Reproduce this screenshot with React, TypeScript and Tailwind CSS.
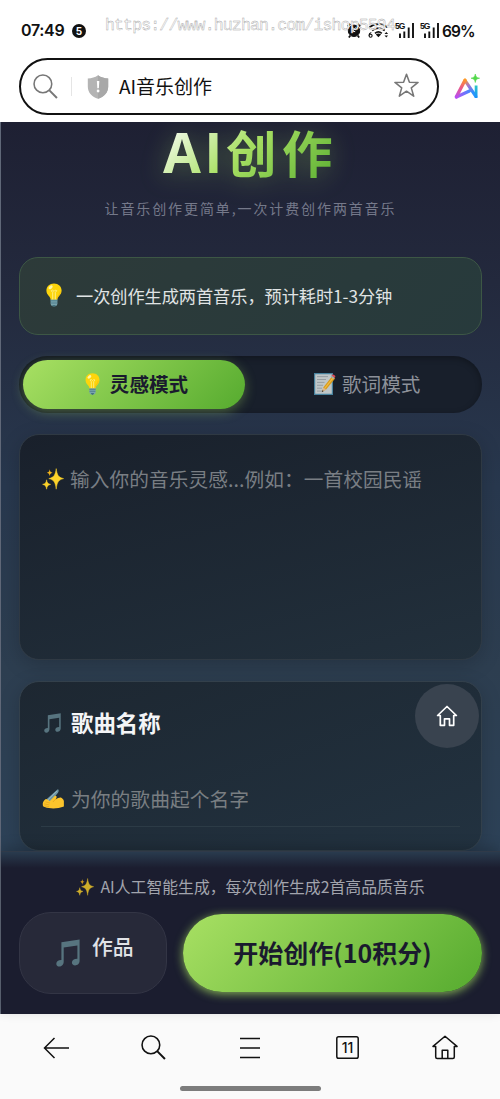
import React from "react";

type IconProps = { className?: string };

const Bulb = ({ className }: IconProps) => (
  <svg className={className} viewBox="0 0 16 24" fill="none">
    <path d="M4.6 16h6.8v4.6c0 1.8-1.4 3-3.4 3s-3.4-1.2-3.4-3z" fill="#78a3ad" />
    <path d="M4.6 17.8h6.8M4.8 20h6.4" stroke="#4c7c8a" strokeWidth=".9" />
    <path d="M6.2 22.2h3.6c-.4 1-1 1.4-1.8 1.4s-1.4-.4-1.8-1.4z" fill="#35626f" />
    <path d="M8 .4C3.6.4.4 3.5.4 7.6c0 2.6 1.2 4 2.4 5.4 1 1.200 1.700 2.200 1.800 3.600h6.800c.1-1.400.8-2.400 1.800-3.600 1.200-1.400 2.400-2.800 2.400-5.400C15.600 3.500 12.400.4 8 .4z" fill="#fdd50b" />
    <path d="M6.700 16.400V9.500L5.300 7.700l1.400-.6 1.300 1.300 1.300-1.300 1.400.6-1.400 1.800v6.900" stroke="#fff2a0" strokeWidth=".8" />
    <ellipse cx="4.600" cy="4.300" rx="2.400" ry="1.500" transform="rotate(-40 4.600 4.300)" fill="#fff6a8" />
    <path d="M14.300 8.500c-.3 3.500-2.800 4.300-3.500 7.300" stroke="#f3b312" strokeWidth=".8" />
  </svg>
);

const Sparkles = ({ className }: IconProps) => (
  <svg className={className} viewBox="0 0 22 22">
    <path d="M14.200.6c.9 6.300 2 8.700 7.400 10-5.400 1.300-6.500 3.900-7.400 10.600-.9-6.700-2-9.300-7.400-10.600 5.400-1.300 6.500-3.700 7.400-10z" fill="#fdd32a" stroke="#fdd32a" strokeWidth=".5" />
    <path d="M4.600 11.800c.5 3 1.200 4 4 4.600-2.800.6-3.500 1.800-4 4.800-.5-3-1.200-4.200-4-4.800 2.800-.6 3.500-1.600 4-4.600z" fill="#fdd32a" stroke="#fdd32a" strokeWidth=".5" />
    <path d="M7.700 1.200c.4 2.200.9 3 2.900 3.500-2 .5-2.500 1.300-2.900 3.500-.4-2.200-.9-3-2.900-3.500 2-.5 2.500-1.300 2.900-3.500z" fill="#f4b41a" />
  </svg>
);

const Notes = ({ className }: IconProps) => (
  <svg className={className} viewBox="0 0 24 28" fill="#57747f">
    <path d="M5.400 3.200 23.600.4v21.400c0 2.800-2.200 4.700-4.500 4.700-1.900 0-3.200-1.200-3.200-2.900 0-2.300 2.300-4 5.500-3.900V6.500L7.700 8.600v14.200c0 2.800-2.100 4.800-4.400 4.800C1.500 27.600.3 26.400.3 24.700c0-2.300 2.100-3.900 5.100-3.800z" />
  </svg>
);

const Memo = ({ className }: IconProps) => (
  <svg className={className} viewBox="0 0 22 22" fill="none">
    <path d="M.6.6h17.800v20.800H.6z" fill="#bfc6c8" stroke="#48839f" strokeWidth="1.200" />
    <path d="M3 3.600h11M3 6.500h9M3 9.400h7.500M3 12.300h6M3 15.200h5M3 18.100h5" stroke="#858d92" strokeWidth=".7" />
    <path d="m8 18.900 1.300-4.500 8.800-11.200 3 2.400-9 11z" fill="#d89a1c" />
    <path d="m10.700 15.300 8.800-10.900" stroke="#f1bd42" strokeWidth="1.100" />
    <path d="m8 18.900 1.300-4.500 2.800 2.200z" fill="#d9b692" />
    <path d="m7.800 19.200.7-2 1.200.9z" fill="#222" />
    <path d="m17.500 2.800.8-1.100c.9-1 3.800 1.200 2.900 2.300l-.8 1z" fill="#d94854" />
    <path d="m16.600 3.700.9-1.100 3 2.400-.9 1.100z" fill="#9daeb4" />
  </svg>
);

const Writing = ({ className }: IconProps) => (
  <svg className={className} viewBox="0 0 23 21" fill="none">
    <path d="M2 18.500 5.100 10 16 .3c1.500.4.9 2.400.2 3.600L8 14z" fill="#6e96a5" />
    <path d="M5.700 11.400 15.200 2" stroke="#a4c0ca" strokeWidth=".8" />
    <path d="M2.400 11.200c1-1.100 2-.8 3.200.2l1.900 1.400 4.900-5.300c1.200-1.200 2.900-.1 2.300 1.300l-1 2.100c2.100-1.300 4.700-2.400 6-1.700.9.500 2.300 1.800 2.700 3.300v5.900c-3.300 1.300-7.700 2.100-11.100 2.100-3.100 0-6.400-.4-9.100-1.500L.5 18.200l-.2-1.500c-.4-1.900.4-3.700 2.100-5.500z" fill="#fbc42c" />
    <path d="m3.400 13.500 4 1.200m-5.300 1 4.800 1m-4.400 1.100 4 .7M13.800 10.500l-2.700 2.900" stroke="#df9e18" strokeWidth=".7" strokeLinecap="round" />
  </svg>
);

const Search = ({ className }: IconProps) => (
  <svg className={className} viewBox="0 0 24 24" fill="none" stroke="currentColor" strokeWidth="1.500">
    <circle cx="9.500" cy="9.500" r="8.500" />
    <path d="m15.500 15.500 7.500 7.500" strokeWidth="1.900" />
  </svg>
);

const Shield = ({ className }: IconProps) => (
  <svg className={className} viewBox="0 0 22 24">
    <path d="M11 .3c3 2.300 6.300 2.900 10.200 3.200v8c0 6.300-4.400 10.400-10.200 12.200C5.200 21.900.8 17.800.8 11.500v-8C4.700 3.200 8 2.600 11 .3z" fill="#b4b4b4" />
    <path d="M11 .3c3 2.300 6.300 2.900 10.200 3.200v8c0 6.300-4.400 10.400-10.200 12.200z" fill="#a8a8a8" />
    <path d="M9.900 6h2.400l-.4 7.200h-1.600z" fill="#fff" />
    <circle cx="11.100" cy="16" r="1.400" fill="#fff" />
  </svg>
);

const Star = ({ className }: IconProps) => (
  <svg className={className} viewBox="0 0 24 24" fill="none" stroke="#777" strokeWidth="1.500" strokeLinejoin="round">
    <path d="m12 1.200 2.800 7.600 8.300.3-6.500 5.200 2.300 7.900L12 17.500l-6.900 4.700 2.300-7.900L.9 9.100l8.300-.3z" />
  </svg>
);

const AiLogo = ({ className }: IconProps) => (
  <svg className={className} viewBox="0 0 26 26" fill="none">
    <defs>
      <linearGradient id="ai-left" x1="11" y1="5" x2="3" y2="24" gradientUnits="userSpaceOnUse">
        <stop stopColor="#ff9a22" />
        <stop offset=".45" stopColor="#ed5b83" />
        <stop offset="1" stopColor="#b64df5" />
      </linearGradient>
      <linearGradient id="ai-base" x1="2" y1="23" x2="16" y2="17" gradientUnits="userSpaceOnUse">
        <stop stopColor="#bb50f5" />
        <stop offset="1" stopColor="#4388ff" />
      </linearGradient>
      <linearGradient id="ai-right" x1="11" y1="5" x2="21" y2="23" gradientUnits="userSpaceOnUse">
        <stop stopColor="#ff9d20" />
        <stop offset=".4" stopColor="#9a72da" />
        <stop offset=".75" stopColor="#2d91ff" />
      </linearGradient>
      <linearGradient id="ai-stem" x1="0" y1="11" x2="0" y2="24" gradientUnits="userSpaceOnUse">
        <stop stopColor="#2cc8c4" />
        <stop offset="1" stopColor="#168fff" />
      </linearGradient>
    </defs>
    <path d="m2.400 23 13-6" stroke="url(#ai-base)" strokeWidth="3.200" strokeLinecap="round" />
    <path d="m11 6.300 10.800 16" stroke="url(#ai-right)" strokeWidth="3.200" strokeLinecap="round" />
    <path d="M2.400 22.800 11 6.300" stroke="url(#ai-left)" strokeWidth="3.400" strokeLinecap="round" />
    <path d="M20.700 11.500h2.800V24h-2.800z" fill="url(#ai-stem)" />
    <path d="M21.300 0c.6 3 1.300 3.600 4.300 4.200-3 .6-3.700 1.300-4.300 4.300-.6-3-1.300-3.700-4.300-4.300C20 3.600 20.700 3 21.300 0z" fill="#52d84a" stroke="#52d84a" strokeWidth=".6" />
  </svg>
);

const Alarm = ({ className }: IconProps) => (
  <svg className={className} viewBox="0 0 14 15" fill="none" stroke="#111">
    <circle cx="7" cy="7.800" r="5.700" fill="#111" />
    <path d="M.7 3.300 3.300.8m7.400 0 2.600 2.500M3.300 12.600l-1.500 1.900m8.900-1.900 1.500 1.900" strokeWidth="1.700" />
    <path d="M8.500 4.500 5.700 8.200l2.500.5" stroke="#fff" strokeWidth="1" />
  </svg>
);

const Wifi = ({ className }: IconProps) => (
  <svg className={className} viewBox="0 0 21 15" fill="none" stroke="#111" strokeWidth="1.700">
    <path d="M1.400 4.300c5-4.300 13-4.300 18 0M4.100 7.500c3.700-3.200 9-3.200 12.600 0M7 10.300c2-1.700 4.800-1.700 6.800 0" />
    <path d="m7.800 11.400 2.600 2.800 2.700-2.800c-1.600-1.200-3.700-1.200-5.300 0z" fill="#111" stroke="none" />
    <path d="M3.300 9.500C1.600 10 1 11.300 1 12.500" strokeWidth="1.100" />
    <circle cx="2.600" cy="12.800" r="1.500" strokeWidth="1.100" />
    <path d="m16.500 11 1.800-2 1.800 2zm0 1.500 1.800 2 1.800-2z" fill="#111" stroke="none" />
  </svg>
);

const Signal = () => (
  <div className="relative h-[15px] w-[20px]">
    <span className="absolute left-0 top-0 font-['Liberation_Sans'] text-[8.500px] font-bold leading-[7px] tracking-[-1px]">5G</span>
    <svg className="h-full w-full" viewBox="0 0 20 15" stroke="#111" strokeWidth="1.900">
      <path d="M5 10.500V15M9.300 8.500V15M13.700 4.500V15M18 0v15" />
    </svg>
  </div>
);

const HomeSmall = ({ className }: IconProps) => (
  <svg className={className} viewBox="0 0 22 22" fill="none" stroke="#fff" strokeWidth="1.700" strokeLinejoin="round" strokeLinecap="round">
    <path d="M4.300 10.500H1.600L11 1.500l9.400 9h-2.700v9.800h-4.200v-6.500h-5v6.500H4.300z" />
  </svg>
);

const StatusBar = () => (
  <div className="relative flex h-[58px] shrink-0 items-start pt-[20px] font-['Inter',sans-serif] text-[#111]">
    <span className="ml-[21px] w-[51px] text-[16px] font-semibold leading-[21px] tracking-[-0.3px]">07:49</span>
    <span className="mt-[4px] flex size-[14px] items-center justify-center rounded-full bg-[#111] text-[10px] font-bold text-white">5</span>
    <Alarm className="ml-[261px] mt-[3px] h-[15px] w-[14px]" />
    <Wifi className="ml-[7px] mt-[3px] h-[15px] w-[21px]" />
    <div className="ml-[6px] mt-[3px]"><Signal /></div>
    <div className="ml-[5px] mt-[3px]"><Signal /></div>
    <span className="ml-[2px] text-[15.500px] font-semibold leading-[23px] tracking-[-0.9px]">69%</span>
    <span className="absolute left-[105px] top-[15px] font-['Liberation_Mono',monospace] text-[16.500px] leading-[22px] tracking-[-0.840px] text-white [-webkit-text-stroke:0.400px_#a3a3a3]">
      https://www.huzhan.com/ishop5594
    </span>
  </div>
);

const AddressBar = () => (
  <div className="flex h-[64px] shrink-0 items-start pl-[19px]">
    <div className="flex h-[57px] w-[420px] items-center rounded-full border-2 border-[#111] bg-white pl-[12px]">
      <Search className="size-[25px] text-[#777]" />
      <span className="ml-[13px] h-[19px] w-px bg-[#e5e5e5]" />
      <Shield className="ml-[15px] h-[24px] w-[22px]" />
      <span className="-mt-[2px] ml-[10px] text-[19px] leading-[28px] text-[#111]">AI音乐创作</span>
      <Star className="-mt-[2px] ml-auto mr-[18px] size-[25px]" />
    </div>
    <AiLogo className="ml-[15px] mt-[16px] size-[26px]" />
  </div>
);

const Hero = () => (
  <header className="flex h-[135px] flex-col items-center">
    <h1 className="flex h-[64px] items-start bg-[linear-gradient(135deg,#ffffff_0%,#a8e063_45%,#56ab2f_100%)] bg-clip-text font-bold text-transparent [filter:drop-shadow(0_3px_12px_rgba(168,224,99,0.320))]">
      <span className="font-['Open_Sans'] text-[55px] leading-[60px] tracking-[3.500px]">AI</span>
      <span className="text-[50.500px] leading-[58px] tracking-[5.500px]">创作</span>
    </h1>
    <p className="mt-[12px] text-[14px] leading-[21px] tracking-[1.900px] text-[#75798a]">让音乐创作更简单,一次计费创作两首音乐</p>
  </header>
);

const Hint = () => (
  <div className="flex h-[78px] items-center rounded-[19px] border border-[#3d5745] bg-[linear-gradient(135deg,#2d3a39,#273a3c)] pl-[26px]">
    <Bulb className="-mt-[2px] h-[24px] w-[16px]" />
    <span className="ml-[14px] text-[17.200px] leading-[26px] tracking-[-0.050px] text-[#e0e4e5]">一次创作生成两首音乐，预计耗时1-3分钟</span>
  </div>
);

const Tabs = () => (
  <div className="mt-[21px] flex h-[57px] rounded-full bg-[#181f2b] p-[4px] shadow-[inset_0_2px_6px_rgba(0,0,0,0.300)]">
    <button className="flex h-[49px] w-[222px] items-center justify-center rounded-full bg-[linear-gradient(135deg,#a8e063,#56ab2f)] pl-[5px] shadow-[0_3px_12px_rgba(168,224,99,0.350)]">
      <Bulb className="-mt-[2px] h-[22px] w-[15px]" />
      <span className="-mt-[2px] ml-[10px] text-[19.600px] font-bold leading-[28px] text-[#1a1a2e]">灵感模式</span>
    </button>
    <button className="flex flex-1 items-center pl-[69px]">
      <Memo className="-mt-[2px] size-[22px]" />
      <span className="-mt-[2px] ml-[6px] text-[19.600px] leading-[28px] text-[#8d919a]">歌词模式</span>
    </button>
  </div>
);

const Inspiration = () => (
  <section className="mt-[21px] flex h-[226px] items-start rounded-[20px] border border-[#2f3943] bg-[linear-gradient(165deg,#19202b,#22303c)] pl-[22px] pt-[33px] shadow-[0_5px_20px_rgba(0,0,0,0.180)]">
    <Sparkles className="size-[22px]" />
    <span className="-mt-[3px] ml-[6px] text-[19.700px] leading-[28px] tracking-[0.050px] text-[#797e84]">输入你的音乐灵感...例如：一首校园民谣</span>
  </section>
);

const SongName = () => (
  <section className="relative mt-[21px] h-[170px] rounded-[20px] border border-[#33404b] bg-[linear-gradient(160deg,#1d2731,#223240)] px-[21px] shadow-[0_5px_20px_rgba(0,0,0,0.180)]">
    <div className="flex h-[80px] items-center">
      <Notes className="ml-[3px] mt-[2px] h-[20px] w-[17px]" />
      <h2 className="ml-[10px] text-[22.400px] font-bold leading-[32px] text-[#f4f5f7]">歌曲名称</h2>
    </div>
    <div className="flex h-[65px] items-end border-b border-[#2c3b46] pb-[13px]">
      <Writing className="mb-[4px] ml-px h-[20px] w-[23px]" />
      <span className="ml-[6px] text-[19.800px] leading-[28px] text-[#797e82]">为你的歌曲起个名字</span>
    </div>
    <button className="absolute right-[2px] top-[2px] flex size-[64px] items-center justify-center rounded-full bg-[#39434f]">
      <HomeSmall className="size-[22px]" />
    </button>
  </section>
);

const ActionPanel = () => (
  <footer className="relative h-[163px] shrink-0 border-t border-[#303a49] bg-[linear-gradient(180deg,#293b4e_0px,#1b1d2f_16px,#1b1d2f_100%)] px-[18px] shadow-[0_-4px_12px_rgba(0,0,0,0.200)]">
    <div className="flex h-[60px] items-center justify-center pt-[9px] text-[#a2a4ad]">
      <Sparkles className="size-[18px] opacity-80" />
      <span className="ml-[6px] text-[15.850px] leading-[24px]">AI人工智能生成，每次创作生成2首高品质音乐</span>
    </div>
    <div className="flex items-center">
      <button className="flex h-[82px] w-[148px] items-center rounded-[32px] border border-[#333545] bg-[#272939] pl-[36px]">
        <Notes className="h-[28px] w-[24px]" />
        <span className="-mt-[15px] ml-[12px] text-[20.800px] font-medium leading-[30px] text-[#e1e2e6]">作品</span>
      </button>
      <button className="ml-[16px] flex h-[78px] flex-1 items-center justify-center rounded-full bg-[linear-gradient(135deg,#a8e063,#56ab2f)] shadow-[0_2px_10px_rgba(168,224,99,0.750)]">
        <span className="-mt-[3px] text-[25px] font-bold leading-[36px] text-[#1a1a2e]">开始创作(10积分)</span>
      </button>
    </div>
  </footer>
);

const BrowserNav = () => (
  <nav className="flex h-[85px] shrink-0 flex-col items-center bg-[#fafafa] text-[#111]">
    <div className="grid h-[67px] w-full grid-cols-5 items-center">
      <svg className="ml-[43px] h-[22px] w-[27px]" viewBox="0 0 27 22" fill="none" stroke="currentColor" strokeWidth="1.500"><path d="M26 11H2M11.500 1 1.500 11l10 10" /></svg>
      <Search className="ml-[41px] size-[25px]" />
      <svg className="ml-[40px] h-[22px] w-[20px]" viewBox="0 0 20 22" stroke="currentColor" strokeWidth="1.700"><path d="M0 1.500h20M0 11h20M0 20.500h20" /></svg>
      <svg className="ml-[36px] size-[23px]" viewBox="0 0 23 23">
        <rect x=".8" y=".8" width="21.400" height="21.400" rx="1.800" fill="none" stroke="currentColor" strokeWidth="1.500" />
        <text x="11.500" y="16.700" textAnchor="middle" fontSize="14" fontWeight="500" fontFamily="Inter" fill="currentColor">11</text>
      </svg>
      <svg className="ml-[32px] h-[25px] w-[26px]" viewBox="0 0 26 25" fill="none" stroke="currentColor" strokeWidth="1.500" strokeLinejoin="round">
        <path d="M1 11.400 13 1.300l12 10.100h-2.700v10.500c0 1-.5 1.500-1.500 1.500H5.200c-1 0-1.500-.5-1.500-1.500V11.400zM10.200 23v-7.700h5.600V23" />
      </svg>
    </div>
    <div className="mt-[5px] h-[5px] w-[141px] rounded-full bg-[#7c7c7c]" />
  </nav>
);

export default function App() {
  return (
    <div className="flex h-[1099px] w-[500px] flex-col overflow-hidden bg-white font-['Noto_Sans_CJK_SC',sans-serif]">
      <StatusBar />
      <AddressBar />
      <div className="flex h-[892px] shrink-0 flex-col border-l border-[#606878] bg-[#1b1d2f]">
        <main className="h-[729px] bg-[linear-gradient(180deg,#1e2033_0%,#23293d_22%,#28384e_50%,#2d3e50_75%,#2d4258_100%)] pl-[18px] pr-[18px]">
          <Hero />
          <Hint />
          <Tabs />
          <Inspiration />
          <SongName />
        </main>
        <ActionPanel />
      </div>
      <BrowserNav />
    </div>
  );
}
